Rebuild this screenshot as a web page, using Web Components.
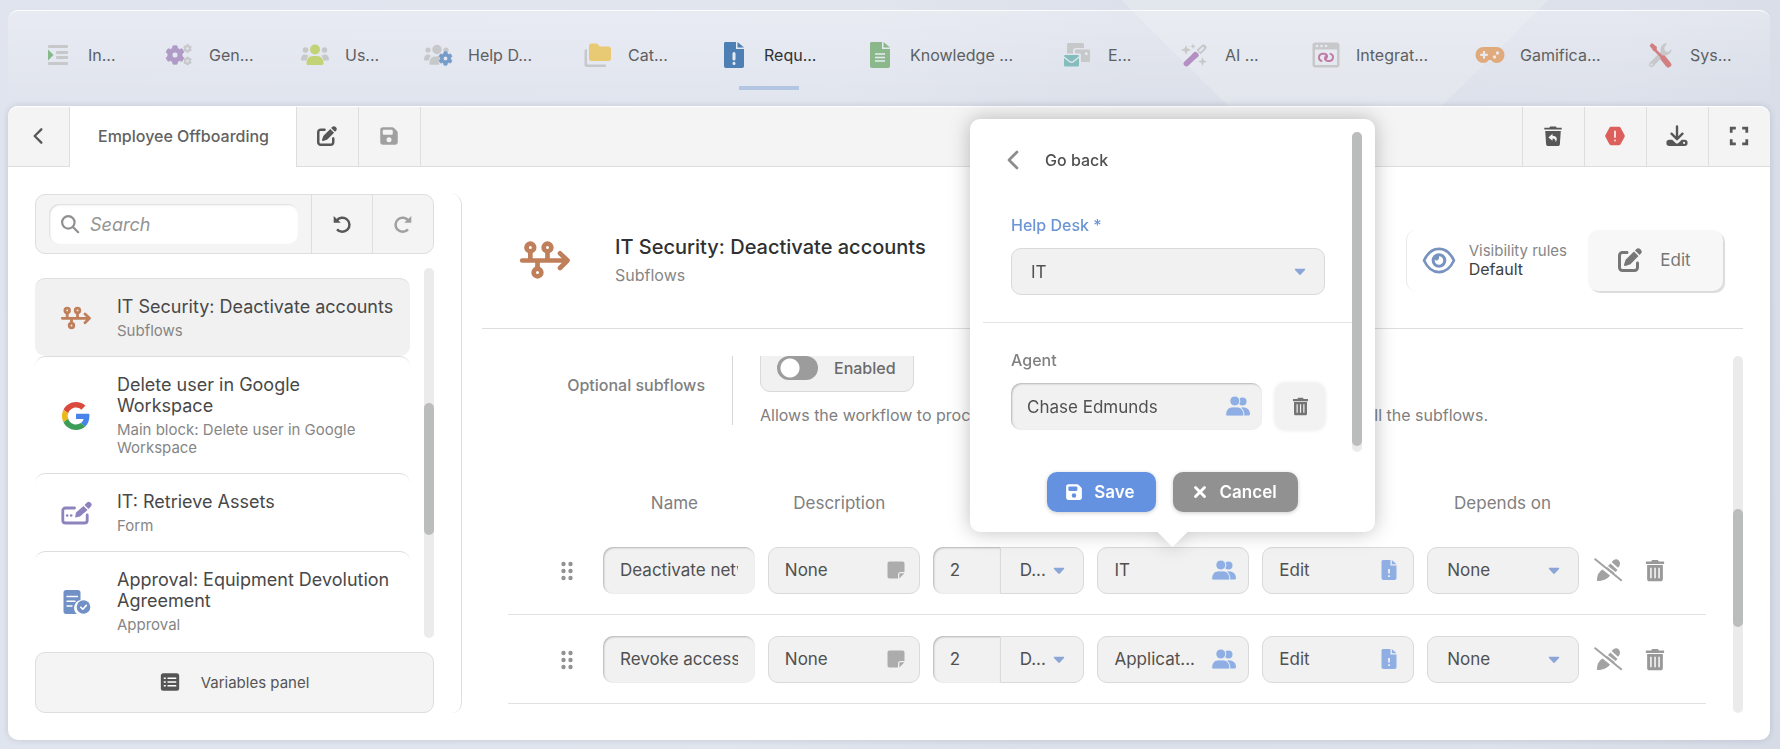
<!DOCTYPE html>
<html lang="en">
<head>
<meta charset="utf-8">
<title>Employee Offboarding</title>
<style>
    html, body{
        margin: 0;
        height: 100%;
    }
    body{
        font-family: Inter, "Liberation Sans", sans-serif;
        font-size: 16px;
        color: #505050;
        --line: #dedede;
        --soft: #f4f4f4;
        --field: #f1f1f1;
        --blue: #6492e0;
        --thumb: #babdbc;
        --track: #ebebeb;
    }
</style>
</head>
<body>
<app-shell>
    <main-nav slot="nav">
        <nav-item icon="indent">In...</nav-item>
        <nav-item icon="gears">Gen...</nav-item>
        <nav-item icon="users">Us...</nav-item>
        <nav-item icon="desk">Help D...</nav-item>
        <nav-item icon="folders">Cat...</nav-item>
        <nav-item icon="request" active>Requ...</nav-item>
        <nav-item icon="article">Knowledge ...</nav-item>
        <nav-item icon="mails">E...</nav-item>
        <nav-item icon="wand">AI ...</nav-item>
        <nav-item icon="integration">Integrat...</nav-item>
        <nav-item icon="gamepad">Gamifica...</nav-item>
        <nav-item icon="tools">Sys...</nav-item>
    </main-nav>
    <tab-strip slot="tabs">Employee Offboarding</tab-strip>
    <block-list slot="side">
        <block-item icon="subflow" selected>IT Security: Deactivate accounts<span slot="kind">Subflows</span></block-item>
        <block-item icon="google">Delete user in Google Workspace<span slot="kind">Main block: Delete user in Google Workspace</span></block-item>
        <block-item icon="form">IT: Retrieve Assets<span slot="kind">Form</span></block-item>
        <block-item icon="approval">Approval: Equipment Devolution Agreement<span slot="kind">Approval</span></block-item>
    </block-list>
    <block-detail slot="detail">
        <span slot="title">IT Security: Deactivate accounts</span>
        <span slot="kind">Subflows</span>
        <optional-setting></optional-setting>
        <subflow-table></subflow-table>
    </block-detail>
    <assign-popover slot="popover"></assign-popover>
</app-shell>

<script>
// cog outline with a round hole, used by the nav icons
function gear(cx, cy, r, hole, teeth, color){
    let d = "";
    const step = Math.PI * 2 / teeth;
    for(let i = 0; i < teeth; i++){
        [[-0.36, 0.76], [-0.2, 1], [0.2, 1], [0.36, 0.76]].forEach(([a, k], n) => {
            const t = i * step + a * step - Math.PI / 2;
            d += (i + n ? "L" : "M") + (cx + Math.cos(t) * r * k).toFixed(2) + " " + (cy + Math.sin(t) * r * k).toFixed(2);
        });
    }
    d += `ZM${cx - hole} ${cy}a${hole} ${hole} 0 1 0 ${hole * 2} 0a${hole} ${hole} 0 1 0 ${-hole * 2} 0Z`;
    return `<path fill="${color}" fill-rule="evenodd" stroke="${color}" stroke-width=".8" stroke-linejoin="round" d="${d}"/>`;
}

const GREY = "#c6c8ca";

const icons = {
    indent: ["0 0 28 28", `<g fill="${GREY}"><rect x="4" y="4" width="20" height="3" rx="1"/><rect x="12" y="10" width="12" height="3" rx="1"/><rect x="12" y="15" width="12" height="3" rx="1"/><rect x="4" y="21" width="20" height="3" rx="1"/></g><path fill="#85b88b" d="M4 8.500l5.500 5.500-5.500 5.500z"/>`],
    gears: ["0 0 28 28", gear(10, 14, 9.4, 3, 6, "#b09bc6") + gear(22.5, 7.500, 4, 1.700, 6, GREY) + gear(22.5, 20, 4, 1.700, 6, GREY)],
    users: ["0 0 28 28", `<g fill="${GREY}"><circle cx="4.500" cy="9" r="2.800"/><circle cx="23.500" cy="9" r="2.800"/><path d="M0 18.500c0-3 1.500-5 4-5 1.800 0 3 .8 3.500 1.500-1 1-1.800 2.500-1.800 4.500H1c-.6 0-1-.4-1-1zM28 18.500c0-3-1.500-5-4-5-1.800 0-3 .8-3.500 1.500 1 1 1.800 2.500 1.800 4.500H27c.6 0 1-.4 1-1z"/></g><g fill="#c2d277"><circle cx="14" cy="8.500" r="5"/><path d="M5.500 22.500c0-4.500 2.500-7.500 6.500-7.500h4c4 0 6.500 3 6.500 7.500 0 .8-.6 1.500-1.500 1.500H7c-.9 0-1.500-.7-1.500-1.500z"/></g>`],
    desk: ["0 0 28 28", `<g fill="${GREY}"><circle cx="4" cy="9" r="2.600"/><circle cx="13" cy="8.500" r="4.700"/><circle cx="22" cy="9" r="2.600"/><path d="M0 18.500c0-3 1.500-5 3.500-5 1.500 0 3 .6 3.300 1.400-1 1-1.800 2.600-1.800 4.600H1c-.6 0-1-.4-1-1zM5.500 22.500c0-4.500 2.500-7 5.500-7h4l.5 2-1 3.500 1 2.800H6.500c-.6 0-1-.5-1-1.300z"/></g>` + gear(21.500, 17.500, 6.800, 2.300, 6, "#759cc9")],
    folders: ["0 0 28 28", `<path fill="${GREY}" d="M3 8v14c0 1 .6 1.500 1.500 1.500H22V25c0 .6-.5 1-1 1H2.500C1.500 26 .5 25 .5 24V10c0-1.200 1-2 2.500-2z"/><path fill="#e9ca74" d="M5 5c0-1.400 1-2.500 2.500-2.500h5.500l3 3h8.500C26 5.500 27 6.500 27 8v9.500c0 1.500-1 2.500-2.500 2.500h-17C6 20 5 19 5 17.500z"/>`],
    request: ["0 0 28 28", `<path fill="#4d7eb4" d="M5.500 1H16v7h8v17c0 1-.7 2-1.800 2H5.800c-1 0-1.800-1-1.800-2V2.500C4 1.700 4.600 1 5.500 1zM17.500 1l6.500 5.500h-6.500z"/><path stroke="#e6ebf3" stroke-width="3" stroke-linecap="round" d="M14 12.500v5.500M14 22.300v.1"/>`],
    article: ["0 0 28 28", `<path fill="#8ab88b" d="M5.500 1H16v7h8v17c0 1-.7 2-1.800 2H5.800c-1 0-1.800-1-1.800-2V2.500C4 1.700 4.600 1 5.500 1zM17.500 1l6.500 5.500h-6.500z"/><path stroke="#e6ebf3" stroke-width="1.300" d="M9 13h10M9 16.500h10M9 20h10"/>`],
    mails: ["0 0 28 28", `<path fill="${GREY}" d="M4.500 2h14c1 0 1.500.6 1.500 1.500V7h-8c-1.700 0-3 1.300-3 3v2.500H3V3.500C3 2.600 3.600 2 4.500 2zM12.500 8.500h12c1 0 1.500.6 1.500 1.500v9.500c0 1-.6 1.500-1.500 1.500H17v-7c0-1-.8-1.700-2-1.700h-4V10c0-1 .6-1.500 1.500-1.500z"/><path fill="#e6ebf3" d="M21 11.500h2.500V14H21z"/><path fill="#85bdbd" d="M1.500 14h12c.9 0 1.500.6 1.500 1.300l-6 4.700c-.9.700-2 .7-3 0L0 15.300C0 14.600.6 14 1.500 14zM0 17l5 4c1.500 1.200 3.500 1.200 5 0l5-4v7c0 1-.7 1.500-1.500 1.500h-12C.7 25.500 0 25 0 24z"/>`],
    wand: ["0 0 28 28", `<path stroke="#b48fc2" stroke-width="5.800" stroke-linecap="round" d="M5.500 22.500L14.500 14"/><path stroke="#b48fc2" stroke-width="5.800" d="M13 15.400L16 12.600"/><path stroke="${GREY}" stroke-width="5.800" stroke-linecap="round" d="M19.500 9.300l3-2.800"/><path stroke="${GREY}" stroke-width="5.800" d="M17.500 11.200l2-1.900"/><path stroke="#e6ebf3" stroke-width="2" stroke-linecap="round" d="M19 9.700l3-2.800"/><path fill="${GREY}" d="M5 4l1.200 3.300L10 9 6.200 10.500 5 14l-1.200-3.500L0 9l3.800-1.700zM12 2.500l.8 1.900 2 .8-2 .9-.8 1.900-.8-1.900-2-.9 2-.8zM21.500 16l1.200 3.300L26 20.500l-3.300 1.300L21.500 25l-1.200-3.200-3.300-1.300 3.300-1.200z"/>`],
    integration: ["0 0 28 28", `<path fill="${GREY}" fill-rule="evenodd" d="M3 1.500h22c1.400 0 2.500 1 2.500 2.500v20c0 1.500-1 2.500-2.500 2.500H3C1.500 26.500.5 25.500.5 24V4C.5 2.500 1.500 1.500 3 1.500zM3 8.500V24h22V8.500z"/><g fill="#e6ebf3"><circle cx="5" cy="5" r="1.300"/><circle cx="9.500" cy="5" r="1.300"/><circle cx="14" cy="5" r="1.300"/></g><g fill="none" stroke="#c07ba6" stroke-width="1.900" stroke-linecap="round" stroke-linejoin="round"><path d="M9.500 20a3.700 3.700 0 0 1 .8-7.200h2.200c2.200 0 3.300 2.200 2.200 4l-1 1.400"/><path d="M18.500 12.800a3.700 3.700 0 0 1-.8 7.200h-2.200c-2.200 0-3.300-2.200-2.200-4l1-1.400"/></g>`],
    gamepad: ["0 0 28 28", `<path fill="#e0aa7c" d="M7.500 6h13a7.500 7.500 0 0 1 0 16c-2.300 0-4-1-5.300-3h-2.400c-1.300 2-3 3-5.300 3a7.500 7.500 0 0 1 0-16z"/><path stroke="#ebe8ea" stroke-width="2.200" stroke-linecap="round" d="M8 10.800v6M5 13.800h6"/><circle cx="21.500" cy="12" r="1.700" fill="#ebe8ea"/><circle cx="18.500" cy="16" r="1.700" fill="#ebe8ea"/>`],
    tools: ["0 0 28 28", `<path fill="none" stroke="${GREY}" stroke-width="5" stroke-linecap="round" d="M5.500 23.500L16 13"/><path fill="${GREY}" d="M21 2a6.500 6.500 0 0 0-6 9l3.500 3.500A6.500 6.500 0 0 0 25.500 8l-3.300 3-3.200-.8-.8-3.200z"/><circle cx="5.500" cy="23.500" r="1" fill="#e6ebf3"/><path stroke="#d27f82" stroke-width="6" stroke-linecap="round" d="M17.500 17.500L22.300 23.500"/><path stroke="#d27f82" stroke-width="2.600" d="M8 8l10 10"/><path fill="#d27f82" d="M3.500 4.500L6 2l5 4-.5 3.500-3 .5z"/>`],
    chevron: ["0 0 24 24", `<path fill="none" stroke="currentColor" stroke-width="2.800" stroke-linecap="round" stroke-linejoin="round" d="M16 4l-8 8 8 8"/>`],
    edit: ["0 0 512 512", `<path fill="currentColor" d="M471.600 21.700c-21.900-21.900-57.300-21.900-79.200 0L362.300 51.700l97.900 97.900 30.100-30.100c21.900-21.900 21.900-57.300 0-79.200L471.600 21.700zm-299.200 220c-6.100 6.100-10.800 13.600-13.500 21.900l-29.600 88.800c-2.900 8.600-.6 18.100 5.800 24.600s15.900 8.700 24.600 5.800l88.800-29.600c8.200-2.700 15.700-7.400 21.900-13.500L437.700 172.300 339.700 74.300 172.400 241.700zM96 64C43 64 0 107 0 160V416c0 53 43 96 96 96H352c53 0 96-43 96-96V320c0-17.700-14.300-32-32-32s-32 14.300-32 32v96c0 17.700-14.300 32-32 32H96c-17.700 0-32-14.300-32-32V160c0-17.700 14.300-32 32-32h96c17.700 0 32-14.300 32-32s-14.300-32-32-32H96z"/>`],
    save: ["-32 0 512 512", `<path fill="currentColor" d="M64 32C28.700 32 0 60.700 0 96V416c0 35.300 28.700 64 64 64H384c35.300 0 64-28.700 64-64V173.300c0-17-6.700-33.300-18.700-45.300L352 50.700C340 38.700 323.700 32 306.700 32H64zm0 96c0-17.700 14.300-32 32-32H288c17.700 0 32 14.300 32 32v64c0 17.700-14.300 32-32 32H96c-17.700 0-32-14.300-32-32V128zM224 288a64 64 0 1 1 0 128 64 64 0 1 1 0-128z"/>`],
    restore: ["0 0 24 24", `<path fill="currentColor" fill-rule="evenodd" d="M2.500 3H8l.8-1.500h6.400L16 3h5.500v2h-19zM3.500 6.500h17L19.500 21c-.1 1.200-1 2-2.100 2H6.600c-1.100 0-2-.8-2.100-2zM7 13.500l4.500 3.800v-2.500c2 0 3.300.8 3.500 4 2.600-4 .5-7-3.500-7V9.500z"/>`],
    alert: ["0 0 24 24", `<path fill="#dd5f5c" d="M7.500 2h9c.7 0 1.300.3 1.600.9l4.300 8c.4.700.4 1.500 0 2.200l-4.300 8c-.3.600-.9.900-1.600.9h-9c-.7 0-1.300-.3-1.600-.9l-4.300-8c-.4-.7-.4-1.500 0-2.200l4.300-8c.3-.6.9-.9 1.600-.9z"/><path stroke="#fbe9e8" stroke-width="2" stroke-linecap="round" d="M12 7v6M12 16.800v.1"/>`],
    download: ["0 0 24 24", `<path fill="none" stroke="currentColor" stroke-width="2.600" stroke-linecap="round" stroke-linejoin="round" d="M12 1.500v12M6 9.500l6 6 6-6"/><path fill="currentColor" fill-rule="evenodd" d="M3.500 16h3.300l3.700 3.500c.9.800 2.100.8 3 0l3.700-3.500h3.300C22.400 16 23.500 17.200 23.500 18.800v1.400c0 1.600-1.100 2.800-3 2.800h-17C1.600 23 .5 21.800.5 20.200v-1.400C.5 17.200 1.600 16 3.500 16zM18.500 19.500a1.200 1.200 0 1 0 2.400 0a1.200 1.200 0 1 0-2.400 0z"/>`],
    expand: ["0 0 24 24", `<path fill="none" stroke="currentColor" stroke-width="3" d="M3.500 8.500v-5h5M15.500 3.500h5v5M20.500 15.500v5h-5M8.500 20.500h-5v-5"/>`],
    search: ["0 0 24 24", `<g fill="none" stroke="currentColor" stroke-width="2.600" stroke-linecap="round"><circle cx="10" cy="10" r="7.500"/><path d="M15.800 15.800l6 6"/></g>`],
    undo: ["0 0 24 24", `<path fill="none" stroke="currentColor" stroke-width="3" d="M5.500 8A8.500 8.500 0 1 1 6 18.500"/><path fill="currentColor" d="M2 2.500v8h8.500l-3-3z"/>`],
    redo: ["0 0 24 24", `<path fill="none" stroke="currentColor" stroke-width="3" d="M18.500 8A8.500 8.500 0 1 0 18 18.500"/><path fill="currentColor" d="M22 2.500v8h-8.500l3-3z"/>`],
    subflow: ["0 0 30 24", `<g fill="none" stroke="#c07f5b" stroke-width="2.800" stroke-linecap="round" stroke-linejoin="round"><path d="M1.300 12.300H28M24 8l4.500 4.300L24 16.800M6.200 7v5M16.500 7v5M10.500 12.500V17"/><circle cx="6.200" cy="4.500" r="2.300"/><circle cx="16.500" cy="4.500" r="2.300"/><circle cx="10.500" cy="19.500" r="2.300"/></g>`],
    google: ["0 0 48 48", `<path fill="#d94a3d" d="M24 9.500c3.540 0 6.710 1.220 9.210 3.600l6.850-6.850C35.900 2.380 30.470 0 24 0 14.620 0 6.510 5.380 2.560 13.220l7.980 6.190C12.430 13.720 17.740 9.500 24 9.500z"/><path fill="#4783e8" d="M46.980 24.550c0-1.570-.15-3.090-.38-4.550H24v9.020h12.940c-.58 2.960-2.260 5.480-4.780 7.180l7.730 6c4.510-4.180 7.090-10.360 7.090-17.650z"/><path fill="#edb81e" d="M10.530 28.590c-.48-1.450-.76-2.990-.76-4.590s.27-3.140.76-4.590l-7.980-6.190C.92 16.460 0 20.120 0 24c0 3.880.92 7.540 2.560 10.780l7.970-6.190z"/><path fill="#3c9e56" d="M24 48c6.480 0 11.930-2.130 15.890-5.810l-7.730-6c-2.150 1.450-4.920 2.300-8.160 2.300-6.260 0-11.570-4.220-13.470-9.910l-7.980 6.190C6.510 42.620 14.620 48 24 48z"/>`],
    form: ["0 0 30 26", `<path fill="none" stroke="#8e83bd" stroke-width="2.800" stroke-linecap="round" stroke-linejoin="round" d="M13.500 8H4.500C3 8 1.800 9 1.800 10.500v10c0 1.500 1.200 2.500 2.700 2.500h19c1.500 0 2.700-1 2.700-2.500V15"/><g fill="#8e83bd"><circle cx="6.200" cy="15.500" r="1.300"/><circle cx="10.200" cy="15.500" r="1.300"/><path d="M14 17.500l1-5 7.500-6.500 4 4-7.500 6.500zM23.500 5l2.200-2.200a2.800 2.800 0 0 1 4 4L27.500 9z"/></g>`],
    approval: ["0 0 30 26", `<path fill="#7190c5" d="M5 1h12c1.500 0 2.500 1 2.500 2.500V11a8 8 0 0 0-3.500 14H5c-1.500 0-2.500-1-2.500-2.500v-19C2.500 2 3.500 1 5 1z"/><path stroke="#fff" stroke-width="1.400" stroke-linecap="round" d="M6 7.500h10.500M6 12.300h8M6 17h5"/><circle cx="22.500" cy="18" r="6.800" fill="#7190c5"/><path fill="none" stroke="#fff" stroke-width="1.600" stroke-linecap="round" stroke-linejoin="round" d="M19.800 18.200l2 2 3.500-3.800"/>`],
    list: ["0 0 24 24", `<rect x="1" y="1.500" width="22" height="21" rx="3" fill="currentColor"/><path stroke="#fff" stroke-width="2" d="M4.500 7.500H7M9 7.500h10.500M4.500 12H7M9 12h10.500M4.500 16.500H7M9 16.500h10.500"/>`],
    eye: ["0 0 34 28", `<g fill="none" stroke="#7893c0"><path stroke-width="2.800" stroke-linejoin="round" d="M1.500 14C5 6.500 10.500 2 17 2s12 4.500 15.500 12C29 21.500 23.500 26 17 26S5 21.500 1.500 14z"/><circle cx="17" cy="14" r="6" stroke-width="3.200"/></g><path fill="#7893c0" d="M17 10.500c0 2.500-1 3.500-3.500 3.500L12 10l5-2z"/>`],
    dots: ["0 0 14 20", `<g fill="#929292"><circle cx="3.500" cy="3" r="2.200"/><circle cx="10.500" cy="3" r="2.200"/><circle cx="3.500" cy="10" r="2.200"/><circle cx="10.500" cy="10" r="2.200"/><circle cx="3.500" cy="17" r="2.200"/><circle cx="10.500" cy="17" r="2.200"/></g>`],
    note: ["0 0 18 18", `<path fill="#acacac" d="M2.500.5h13c1.200 0 2 .8 2 2V11h-4c-1.500 0-2.500 1-2.500 2.500v4H2.500c-1.200 0-2-.8-2-2v-13c0-1.200.8-2 2-2zM17.500 12.300l-5.200 5.200v-4c0-.8.400-1.200 1.200-1.200z"/>`],
    people: ["0 0 24 20", `<g fill="#8fafe4"><circle cx="16.500" cy="5.500" r="4"/><path d="M15.500 11.300c5.500-.5 8.500 2.800 8.500 7 0 .7-.5 1.200-1.200 1.200H18z"/></g><g fill="#8fafe4" stroke="#f1f1f1" stroke-width="1"><circle cx="8.800" cy="5" r="5"/><path d="M-.3 18.500c0-4.700 3-7.600 6.600-7.600h4.900c3.600 0 6.600 2.900 6.600 7.600 0 .8-.7 1.600-1.500 1.600H1.200c-.8 0-1.500-.8-1.500-1.600z"/></g>`],
    doc: ["0 0 16 20", `<path fill="#8fafe4" d="M2 0h7.500v5.500H15.500V18c0 1.200-.8 2-2 2H2.500C1.300 20 .5 19.200.5 18V2C.5.8 1 0 2 0zM10.800 0l4.700 4.300h-4.700z"/><path stroke="#f1f1f1" stroke-width="1.800" d="M8 9v4.500M8 15.300v1.800"/>`],
    caret: ["0 0 12 8", `<path fill="#8aa5d6" d="M1.500.8h9c.7 0 1 .6.500 1.200L6.800 6.600c-.5.500-1.100.5-1.600 0L1 2C.5 1.400.8.800 1.500.8z"/>`],
    trash: ["0 0 20 24", `<path fill="currentColor" fill-rule="evenodd" d="M.5 2.500H6L7 1h6l1 1.500h5.500v2.800H.5zM1.800 6.300h16.400V21c0 1.300-1 2.200-2.200 2.200H4c-1.300 0-2.200-1-2.200-2.200zM5 9v11h1.500V9zM9.300 9v11h1.500V9zM13.500 9v11H15V9z"/>`],
    nopen: ["0 0 28 24", `<path fill="#a2a2a2" d="M3 23c-.2-5 1.500-9 5.500-11.500l7.500 6C13 21.500 8.500 23 3 23z"/><path fill="#a2a2a2" d="M12.500 9.500l4-4 7 6.500-3.500 3.800zM17.800 4.200c2.200-3.800 5.700-3.500 7.200-1.500s1.500 4.500-1 7z"/><path stroke="#fff" stroke-width="1.500" d="M3 .5l26 20"/><path stroke="#a2a2a2" stroke-width="2" stroke-linecap="round" d="M1.200 1.200l26 21"/>`],
    close: ["0 0 24 24", `<path stroke="currentColor" stroke-width="3.800" stroke-linecap="round" d="M6 6l12 12M18 6L6 18"/>`]
};

// base class: every element below only supplies its own markup
class Base extends HTMLElement{
    constructor(){
        super();
        this.attachShadow({mode: "open"});
    }
    connectedCallback(){
        this.shadowRoot.innerHTML = `<style>*{box-sizing: border-box;}</style>` + this.render();
    }
}

class UiIcon extends Base{
    render(){
        const [box, body] = icons[this.getAttribute("name")];
        return `
        <style>
            :host{ display: inline-flex; flex: none; width: 24px; height: 24px; }
            svg{ width: 100%; height: 100%; display: block; overflow: visible; }
        </style>
        <svg viewBox="${box}" fill="none" aria-hidden="true">${body}</svg>`;
    }
}

class ScrollRail extends Base{
    render(){
        return `
        <style>
            :host{
                display: flex;
                flex-direction: column;
                flex: none;
                width: 10px;
                border-radius: 5px;
                background: var(--track);
            }
            .before{ flex: ${this.getAttribute("before")} 0 0; }
            .thumb{ flex: ${this.getAttribute("thumb")} 0 0; border-radius: 5px; background: var(--thumb); }
            .after{ flex: ${this.getAttribute("after")} 0 0; }
        </style>
        <div class="before"></div><div class="thumb"></div><div class="after"></div>`;
    }
}

class AppShell extends Base{
    render(){
        return `
        <style>
            :host{
                display: flex;
                flex-direction: column;
                position: relative;
                isolation: isolate;
                box-sizing: border-box;
                min-height: 100vh;
                padding: 10px 10px 9px 8px;
                background: linear-gradient(100deg, #e0e4ee 0%, #e1e5ee 45%, #dce0ea 60%, #dde1eb 85%, #d6dbe6 100%);
            }
            /* pale facet behind the navigation */
            :host::before{
                content: "";
                position: absolute;
                inset: 0;
                z-index: -1;
                background: #e2e6ed;
                clip-path: polygon(63% 0, 87% 0, 81% 106px, 69% 106px);
            }
            main{
                flex: 1;
                display: flex;
                flex-direction: column;
                position: relative;
                border-radius: 10px;
                background: #fff;
                box-shadow: 0 0 6px rgba(60, 70, 100, .18);
            }
            .columns{ flex: 1; display: flex; gap: 20px; padding: 27px; min-height: 0; }
            slot[name="side"]::slotted(*){ flex: none; }
            slot[name="detail"]::slotted(*){ flex: 1; min-width: 0; }
        </style>
        <slot name="nav"></slot>
        <main>
            <slot name="tabs"></slot>
            <div class="columns">
                <slot name="side"></slot>
                <slot name="detail"></slot>
            </div>
            <slot name="popover"></slot>
        </main>`;
    }
}

class MainNav extends Base{
    render(){
        return `
        <style>
            :host{
                display: block;
                height: 96px;
                box-sizing: border-box;
                border-top: 1px solid #fbfcfd;
                border-radius: 10px 10px 0 0;
                background: linear-gradient(rgba(255, 255, 255, .25), rgba(255, 255, 255, 0));
            }
            nav{
                display: grid;
                grid-template-columns: 121fr 136fr 123fr 160fr 136fr 146fr 198fr 117fr 131fr 164fr 170fr 85fr;
                height: 100%;
                padding: 0 39px 0 36px;
            }
        </style>
        <nav><slot></slot></nav>`;
    }
}

class NavItem extends Base{
    render(){
        const active = this.hasAttribute("active");
        return `
        <style>
            :host{ display: flex; min-width: 0; }
            a{
                display: flex;
                align-items: center;
                gap: 16px;
                position: relative;
                height: 88px;
                color: ${active ? "#303234" : "#5d6062"};
                text-decoration: none;
                white-space: nowrap;
            }
            ui-icon{ width: 28px; height: 28px; }
            .mark{
                position: absolute;
                left: 20%;
                right: 18%;
                bottom: 9px;
                height: 4px;
                background: #b3c5e0;
            }
        </style>
        <a href="#"${active ? ` aria-current="page"` : ""}><ui-icon name="${this.getAttribute("icon")}"></ui-icon><span><slot></slot></span>${active ? `<i class="mark"></i>` : ""}</a>`;
    }
}

class TabStrip extends Base{
    render(){
        return `
        <style>
            :host{
                display: flex;
                height: 61px;
                box-sizing: border-box;
                border-radius: 10px 10px 0 0;
                background: linear-gradient(var(--line), var(--line)) bottom / 100% 1px no-repeat, var(--soft);
                border-top: 1px solid #fff;
            }
            button{
                width: 62px;
                padding: 0 2px 2px 0;
                border: 0;
                border-right: 1px solid var(--line);
                background: none;
                font: inherit;
                color: #575757;
                display: flex;
                align-items: center;
                justify-content: center;
            }
            button.tab{
                width: auto;
                padding: 0 27px 2px 28px;
                background: #fff;
                font-weight: 500;
                color: #626262;
            }
            .right{ display: flex; margin-left: auto; }
            .right button{ border-right: 0; border-left: 1px solid var(--line); }
            ui-icon{ width: 20px; height: 20px; }
            .right ui-icon{ width: 22px; height: 22px; }
            .off{ color: #a0a0a0; }
        </style>
        <button aria-label="Back"><ui-icon name="chevron"></ui-icon></button>
        <button class="tab"><slot></slot></button>
        <button aria-label="Rename"><ui-icon name="edit"></ui-icon></button>
        <button aria-label="Save" class="off"><ui-icon name="save"></ui-icon></button>
        <div class="right">
            <button aria-label="Restore"><ui-icon name="restore"></ui-icon></button>
            <button aria-label="Problems"><ui-icon name="alert"></ui-icon></button>
            <button aria-label="Download"><ui-icon name="download"></ui-icon></button>
            <button aria-label="Full screen"><ui-icon name="expand"></ui-icon></button>
        </div>`;
    }
}

class BlockList extends Base{
    render(){
        return `
        <style>
            :host{
                display: flex;
                flex-direction: column;
                gap: 14px;
                width: 427px;
                box-sizing: border-box;
                padding-right: 27px;
                border-right: 1px solid var(--line);
                border-radius: 10px;
            }
            .bar{
                display: flex;
                height: 60px;
                border: 1px solid var(--line);
                border-radius: 10px;
                background: var(--soft);
            }
            .find{
                flex: 1;
                display: flex;
                align-items: center;
                gap: 10px;
                min-width: 0;
                margin: 9px 13px;
                padding: 0 11px;
                border-radius: 10px;
                background: #fff;
                box-shadow: inset 1px 1px 2px rgba(0, 0, 0, .15);
                color: #8f8f8f;
            }
            .find ui-icon{ width: 20px; height: 20px; }
            input{
                flex: 1;
                min-width: 0;
                border: 0;
                padding: 0;
                background: none;
                font: inherit;
                font-size: 18px;
                font-style: italic;
                outline: 0;
            }
            input::placeholder{ color: #949494; opacity: 1; }
            .bar button{
                width: 61px;
                padding: 0;
                border: 0;
                border-left: 1px solid var(--line);
                background: none;
                color: #575757;
            }
            .bar button:last-child{ color: #a0a0a0; }
            .bar button ui-icon{ width: 20px; height: 20px; vertical-align: middle; }
            .scroll{ flex: 1 0 370px; height: 370px; display: flex; gap: 14px; }
            .items{ flex: 1; min-width: 0; padding-top: 10px; overflow: hidden; }
            .vars{
                display: flex;
                align-items: center;
                justify-content: center;
                gap: 21px;
                height: 61px;
                padding-bottom: 2px;
                border: 1px solid var(--line);
                border-radius: 10px;
                background: var(--soft);
                color: #555;
                font: inherit;
                font-size: 15px;
            }
            .vars ui-icon{ width: 20px; height: 20px; }
        </style>
        <div class="bar">
            <label class="find"><ui-icon name="search"></ui-icon><input type="text" placeholder="Search" aria-label="Search"></label>
            <button aria-label="Undo"><ui-icon name="undo"></ui-icon></button>
            <button aria-label="Redo"><ui-icon name="redo"></ui-icon></button>
        </div>
        <div class="scroll">
            <div class="items"><slot></slot></div>
            <scroll-rail before="135" thumb="132" after="103"></scroll-rail>
        </div>
        <button class="vars"><ui-icon name="list"></ui-icon>Variables panel</button>`;
    }
}

class BlockItem extends Base{
    render(){
        return `
        <style>
            :host{
                display: flex;
                align-items: center;
                gap: 26px;
                box-sizing: border-box;
                padding: 17px 10px 16px 26px;
                border-top: 1px solid var(--line);
                border-radius: 10px;
                line-height: 21px;
                font-size: 18px;
                color: #484848;
            }
            :host([selected]){ background: var(--field); }
            ui-icon{ width: 30px; height: 28px; }
            .text{ display: flex; flex-direction: column; gap: 5px; }
            .kind{ font-size: 15px; line-height: 18px; color: #868686; }
        </style>
        <ui-icon name="${this.getAttribute("icon")}"></ui-icon>
        <div class="text"><div><slot></slot></div><div class="kind"><slot name="kind"></slot></div></div>`;
    }
}

class BlockDetail extends Base{
    render(){
        return `
        <style>
            :host{ display: flex; flex-direction: column; gap: 27px; }
            header{
                display: flex;
                align-items: center;
                height: 135px;
                padding: 0 20px 2px 38px;
                border-bottom: 1px solid var(--line);
            }
            header > ui-icon{ width: 50px; height: 40px; margin-right: 45px; }
            .name{ display: flex; flex-direction: column; gap: 6px; flex: 1; }
            h1{ margin: 0; font-size: 20px; line-height: 24px; font-weight: 500; color: #303030; }
            .kind{ line-height: 20px; color: #868686; }
            .rules{
                display: flex;
                align-items: center;
                gap: 13px;
                height: 61px;
                padding: 0 21px 0 15px;
                border-left: 1px solid #e8e8e8;
                border-radius: 10px;
                font-size: 15px;
                line-height: 19px;
                color: #868686;
            }
            .rules ui-icon{ width: 34px; height: 27px; }
            .rules strong{ display: block; font-size: 16px; font-weight: 400; color: #404040; }
            button{
                display: flex;
                align-items: center;
                justify-content: center;
                gap: 18px;
                width: 135px;
                height: 61px;
                padding: 0 2px 0 0;
                border: 0;
                border-radius: 10px;
                background: #f7f7f7;
                box-shadow: 2px 2px 1px rgba(0, 0, 0, .14);
                font: inherit;
                font-size: 17px;
                color: #777;
            }
            button ui-icon{ width: 24px; height: 24px; }
            .scroll{ flex: 1; display: flex; gap: 27px; min-height: 0; }
            .body{ flex: 1; min-width: 0; height: 357px; overflow: hidden; padding-left: 26px; }
        </style>
        <header>
            <ui-icon name="subflow"></ui-icon>
            <div class="name"><h1><slot name="title"></slot></h1><div class="kind"><slot name="kind"></slot></div></div>
            <div class="rules"><ui-icon name="eye"></ui-icon><div>Visibility rules<strong>Default</strong></div></div>
            <button><ui-icon name="edit"></ui-icon>Edit</button>
        </header>
        <div class="scroll">
            <div class="body"><slot></slot></div>
            <scroll-rail before="153" thumb="118" after="86"></scroll-rail>
        </div>`;
    }
}

class OptionalSetting extends Base{
    render(){
        return `
        <style>
            :host{ display: flex; align-items: stretch; height: 69px; }
            .label{
                display: flex;
                align-items: center;
                justify-content: flex-end;
                width: 225px;
                padding: 0 27px 12px 0;
                border-right: 1px solid #d6d6d6;
                font-weight: 500;
                color: #808080;
            }
            .value{ display: flex; flex-direction: column; justify-content: flex-end; gap: 13px; padding-left: 27px; }
            label{
                display: flex;
                align-items: center;
                gap: 16px;
                align-self: flex-start;
                height: 49px;
                flex: none;
                padding: 0 17px 0 16px;
                border: 1px solid #d9d9d9;
                border-radius: 10px;
                background: var(--field);
                font-weight: 500;
                color: #6a6a6a;
            }
            input{
                appearance: none;
                width: 41px;
                height: 24px;
                margin: 0;
                border-radius: 12px;
                background: radial-gradient(circle at 13px 12px, #fff 9px, transparent 10px) #9c9c9c;
            }
            p{ margin: 0; line-height: 20px; color: #808080; white-space: nowrap; }
        </style>
        <div class="label">Optional subflows</div>
        <div class="value">
            <label><input type="checkbox" role="switch">Enabled</label>
            <p>Allows the workflow to proceed to the next step without the need of completing all the subflows.</p>
        </div>`;
    }
}

const subflows = [
    {name: "Deactivate network access", count: 2, owner: "IT"},
    {name: "Revoke access to systems", count: 2, owner: "Applicat..."}
];

class SubflowTable extends Base{
    row(flow, i){
        return `
        <tr>
            <td class="grip"><ui-icon name="dots"></ui-icon></td>
            <td><input type="text" aria-label="Name ${i}" value="${flow.name}"></td>
            <td><button class="box">None<ui-icon class="note" name="note"></ui-icon></button></td>
            <td>
                <div class="pair">
                    <input type="text" aria-label="Amount ${i}" value="${flow.count}">
                    <div class="pick"><select aria-label="Unit ${i}"><option>D...</option></select><ui-icon class="caret" name="caret"></ui-icon></div>
                </div>
            </td>
            <td><button class="box">${flow.owner}<ui-icon class="people" name="people"></ui-icon></button></td>
            <td><button class="box">Edit<ui-icon class="doc" name="doc"></ui-icon></button></td>
            <td><div class="pick"><select aria-label="Depends on ${i}"><option>None</option></select><ui-icon class="caret" name="caret"></ui-icon></div></td>
            <td>
                <div class="actions">
                    <button aria-label="Not editable"><ui-icon class="pen" name="nopen"></ui-icon></button>
                    <button aria-label="Delete"><ui-icon class="bin" name="trash"></ui-icon></button>
                </div>
            </td>
        </tr>`;
    }
    render(){
        return `
        <style>
            :host{ display: block; padding-top: 55px; }
            table{ width: 100%; table-layout: fixed; border-collapse: separate; border-spacing: 0; font-size: 17px; }
            .first{ width: 88px; }
            .last{ width: 121px; }
            th{ height: 46px; padding: 0 8px 0 0; font-weight: 400; color: #808080; white-space: nowrap; }
            th.wide{ padding: 0; }
            td{ height: 89px; padding: 0 6px 0 7px; border-bottom: 1px solid #e2e2e2; }
            td.grip{ padding-left: 52px; }
            .grip ui-icon{ width: 14px; height: 20px; vertical-align: middle; }
            input, select, .box{
                display: block;
                width: 100%;
                height: 47px;
                margin: 0;
                border: 1px solid #d9d9d9;
                border-radius: 10px;
                background: var(--field);
                font: inherit;
                color: #505050;
                text-align: left;
            }
            input{
                padding: 0 17px;
                border: 0;
                box-shadow: inset 1px 1px 2px rgba(0, 0, 0, .25);
            }
            select{ appearance: none; padding: 0 19px; }
            .box{ display: flex; align-items: center; justify-content: space-between; padding: 0 12px 0 16px; }
            .note{ width: 18px; height: 18px; margin-right: 2px; }
            .people{ width: 24px; height: 20px; }
            .doc{ width: 16px; height: 20px; margin-right: 4px; }
            .pick{ position: relative; flex: 1; min-width: 0; }
            .caret{ position: absolute; right: 19px; top: 20px; width: 12px; height: 8px; }
            .pair{ display: flex; }
            .pair input{ width: 67px; border-radius: 10px 0 0 10px; }
            .pair select{ border-radius: 0 10px 10px 0; }
            .actions{ display: flex; align-items: center; gap: 22px; padding-left: 2px; }
            .actions button{ border: 0; padding: 0; background: none; color: #999; display: flex; }
            .pen{ width: 28px; height: 24px; }
            .bin{ width: 22px; height: 23px; }
        </style>
        <table>
            <colgroup><col class="first"><col><col><col><col><col><col><col class="last"></colgroup>
            <thead><tr><th></th><th>Name</th><th>Description</th><th>Duration</th><th>Assignee</th><th>Form</th><th class="wide">Depends on</th><th></th></tr></thead>
            <tbody>${subflows.map((flow, i) => this.row(flow, i + 1)).join("")}</tbody>
        </table>`;
    }
}

class AssignPopover extends Base{
    render(){
        return `
        <style>
            :host{
                display: block;
                position: absolute;
                top: 13px;
                right: 395px;
                width: 405px;
                height: 413px;
                box-sizing: border-box;
                padding: 13px;
                border-radius: 10px;
                background: #fff;
                filter: drop-shadow(0 0 10px rgba(0, 0, 0, .25));
            }
            .arrow{
                position: absolute;
                top: 100%;
                left: 50%;
                margin-left: -15px;
                width: 30px;
                height: 15px;
                background: #fff;
                clip-path: polygon(0 0, 100% 0, 50% 100%);
            }
            .scroll{ display: flex; height: 320px; }
            form{ flex: 1; min-width: 0; }
            .back{
                display: flex;
                align-items: center;
                gap: 20px;
                height: 56px;
                padding: 0 0 0 18px;
                border: 0;
                background: none;
                font: inherit;
                font-weight: 500;
                color: #505050;
            }
            .back ui-icon{ color: #8c8c8c; }
            .group{ padding: 26px 27px 27px 28px; }
            .group + .group{ border-top: 1px solid #e4e4e4; }
            .group label{ display: block; height: 22px; margin-bottom: 12px; line-height: 22px; font-weight: 500; color: #808080; }
            .group .key{ color: #6b95d4; }
            .field{
                position: relative;
                flex: 1;
                font-size: 17px;
            }
            select, input{
                display: block;
                width: 100%;
                height: 47px;
                border: 1px solid #d9d9d9;
                border-radius: 10px;
                background: var(--field);
                font: inherit;
                color: #505050;
            }
            select{ appearance: none; padding: 0 19px; }
            input{ border: 0; padding: 0 40px 0 16px; box-shadow: inset 1px 1px 2px rgba(0, 0, 0, .25); }
            .caret{ position: absolute; right: 19px; top: 20px; width: 12px; height: 8px; }
            .people{ position: absolute; right: 12px; top: 13px; width: 24px; height: 20px; }
            .row{ display: flex; gap: 13px; }
            .bin{
                width: 50px;
                height: 47px;
                padding: 0;
                border: 0;
                border-radius: 10px;
                background: #f2f2f2;
                box-shadow: 0 0 4px rgba(0, 0, 0, .1);
                color: #747474;
            }
            .bin ui-icon{ width: 17px; height: 19px; vertical-align: middle; }
            .buttons{ display: flex; justify-content: center; gap: 17px; padding-top: 20px; }
            .buttons button{
                display: flex;
                align-items: center;
                gap: 11px;
                height: 40px;
                padding: 0 21px 0 18px;
                border: 0;
                border-radius: 10px;
                background: var(--blue);
                box-shadow: 0 1px 4px rgba(0, 0, 0, .2);
                font: inherit;
                font-size: 17px;
                font-weight: 600;
                color: #fff;
            }
            .buttons .cancel{ background: #919191; }
            .buttons ui-icon{ width: 18px; height: 18px; }
        </style>
        <div class="scroll">
            <form>
                <button type="button" class="back"><ui-icon name="chevron"></ui-icon>Go back</button>
                <div class="group">
                    <label class="key" for="desk">Help Desk *</label>
                    <div class="field"><select id="desk"><option>IT</option></select><ui-icon class="caret" name="caret"></ui-icon></div>
                </div>
                <div class="group">
                    <label for="agent">Agent</label>
                    <div class="row">
                        <div class="field"><input id="agent" type="text" value="Chase Edmunds"><ui-icon class="people" name="people"></ui-icon></div>
                        <button type="button" class="bin" aria-label="Remove agent"><ui-icon name="trash"></ui-icon></button>
                    </div>
                </div>
            </form>
            <scroll-rail before="0" thumb="314" after="6"></scroll-rail>
        </div>
        <div class="buttons">
            <button type="button"><ui-icon name="save"></ui-icon>Save</button>
            <button type="button" class="cancel"><ui-icon name="close"></ui-icon>Cancel</button>
        </div>
        <div class="arrow"></div>`;
    }
}

customElements.define("ui-icon", UiIcon);
customElements.define("scroll-rail", ScrollRail);
customElements.define("app-shell", AppShell);
customElements.define("main-nav", MainNav);
customElements.define("nav-item", NavItem);
customElements.define("tab-strip", TabStrip);
customElements.define("block-list", BlockList);
customElements.define("block-item", BlockItem);
customElements.define("block-detail", BlockDetail);
customElements.define("optional-setting", OptionalSetting);
customElements.define("subflow-table", SubflowTable);
customElements.define("assign-popover", AssignPopover);
</script>
</body>
</html>
